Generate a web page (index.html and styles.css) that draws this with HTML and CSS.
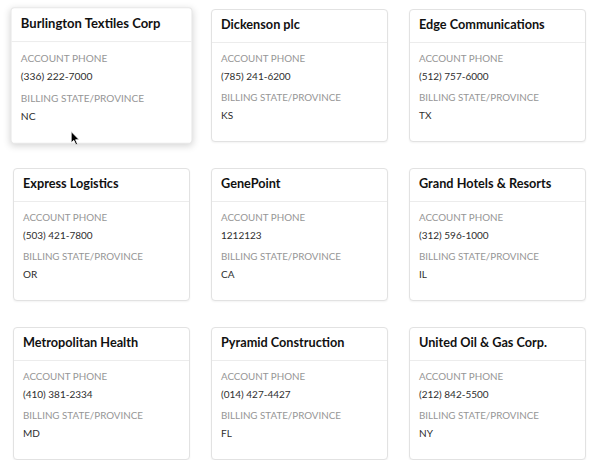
FILE: index.html
```html
<!DOCTYPE html>
<html>
<head>
<meta charset="utf-8">
<link rel="stylesheet" href="styles.css">
</head>
<body>
<div class="grid">
  <div class="card card-hover">
    <div class="card-header">Burlington Textiles Corp</div>
    <div class="card-body">
      <div class="label">ACCOUNT PHONE</div>
      <div class="value">(336) 222-7000</div>
      <div class="label">BILLING STATE/PROVINCE</div>
      <div class="value">NC</div>
    </div>
    <svg class="cursor" width="10" height="15" viewBox="0 0 10 15"><path d="M1 1 L1 12 L3.6 9.6 L5.6 14 L7.2 13.3 L5.3 9 L8.8 9 Z" fill="#000" stroke="#fff" stroke-width="0.8"/></svg>
  </div>
  <div class="card">
    <div class="card-header">Dickenson plc</div>
    <div class="card-body">
      <div class="label">ACCOUNT PHONE</div>
      <div class="value">(785) 241-6200</div>
      <div class="label">BILLING STATE/PROVINCE</div>
      <div class="value">KS</div>
    </div>
  </div>
  <div class="card">
    <div class="card-header">Edge Communications</div>
    <div class="card-body">
      <div class="label">ACCOUNT PHONE</div>
      <div class="value">(512) 757-6000</div>
      <div class="label">BILLING STATE/PROVINCE</div>
      <div class="value">TX</div>
    </div>
  </div>
  <div class="card">
    <div class="card-header">Express Logistics</div>
    <div class="card-body">
      <div class="label">ACCOUNT PHONE</div>
      <div class="value">(503) 421-7800</div>
      <div class="label">BILLING STATE/PROVINCE</div>
      <div class="value">OR</div>
    </div>
  </div>
  <div class="card">
    <div class="card-header">GenePoint</div>
    <div class="card-body">
      <div class="label">ACCOUNT PHONE</div>
      <div class="value">1212123</div>
      <div class="label">BILLING STATE/PROVINCE</div>
      <div class="value">CA</div>
    </div>
  </div>
  <div class="card">
    <div class="card-header">Grand Hotels &amp; Resorts</div>
    <div class="card-body">
      <div class="label">ACCOUNT PHONE</div>
      <div class="value">(312) 596-1000</div>
      <div class="label">BILLING STATE/PROVINCE</div>
      <div class="value">IL</div>
    </div>
  </div>
  <div class="card">
    <div class="card-header">Metropolitan Health</div>
    <div class="card-body">
      <div class="label">ACCOUNT PHONE</div>
      <div class="value">(410) 381-2334</div>
      <div class="label">BILLING STATE/PROVINCE</div>
      <div class="value">MD</div>
    </div>
  </div>
  <div class="card">
    <div class="card-header">Pyramid Construction</div>
    <div class="card-body">
      <div class="label">ACCOUNT PHONE</div>
      <div class="value">(014) 427-4427</div>
      <div class="label">BILLING STATE/PROVINCE</div>
      <div class="value">FL</div>
    </div>
  </div>
  <div class="card">
    <div class="card-header">United Oil &amp; Gas Corp.</div>
    <div class="card-body">
      <div class="label">ACCOUNT PHONE</div>
      <div class="value">(212) 842-5500</div>
      <div class="label">BILLING STATE/PROVINCE</div>
      <div class="value">NY</div>
    </div>
  </div>
</div>
</body>
</html>
```
FILE: styles.css
```css
html, body {
  margin: 0;
  background: #ffffff;
}
body {
  font-family: Lato, "Open Sans", sans-serif;
}
.grid {
  display: grid;
  grid-template-columns: repeat(3, 177px);
  grid-auto-rows: 133px;
  column-gap: 21px;
  row-gap: 26px;
  padding: 9px 0 0 13px;
}
.card {
  position: relative;
  box-sizing: border-box;
  background: #fff;
  border: 1px solid #e2e2e2;
  border-radius: 4px;
  box-shadow: 0 1px 2px rgba(0,0,0,0.05);
}
.card-hover {
  transform: scale(1.028);
  box-shadow: 0 2px 7px rgba(0,0,0,0.17);
  border-color: #e8e8e8;
}
.card-header {
  height: 32px;
  line-height: 28px;
  padding: 0 9px;
  font-size: 12.7px;
  font-weight: 700;
  color: #111;
  border-bottom: 1px solid #ececec;
  white-space: nowrap;
}
.card-body {
  padding: 8px 9px 0 9px;
}
.label {
  font-size: 9.8px;
  line-height: 14px;
  color: #969696;
}
.value {
  font-size: 10px;
  line-height: 16px;
  margin-top: 3px;
  margin-bottom: 6px;
  color: #2e2e2e;
}
.cursor {
  position: absolute;
  left: 57px;
  top: 119px;
}
```
